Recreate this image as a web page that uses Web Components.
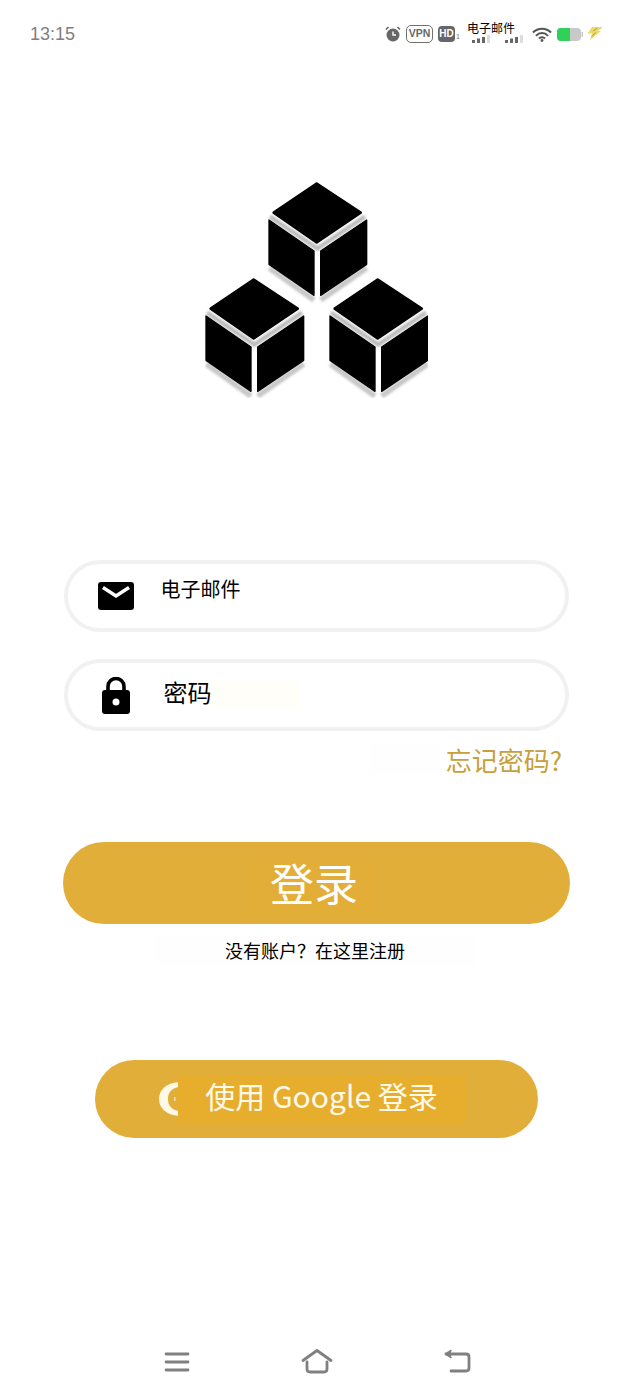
<!DOCTYPE html>
<html lang="zh">
<head>
<meta charset="utf-8">
<title>登录</title>
<style>
  html, body { margin: 0; padding: 0; background: #fff; }
  body { font-family: "Noto Sans CJK SC", "Noto Sans", sans-serif; }
</style>
</head>
<body>
<login-page>
  <status-bar></status-bar>
  <cube-logo></cube-logo>
  <field-row style="--mt: 162px; --label-size: 20px; --label-gap: 27px; --label-drop: 14px; --icon-left: 29.500px; --patch: 0;">
    <svg slot="icon" width="36" height="28" viewBox="0 0 36 28">
      <rect x="0" y="0" width="36" height="28" rx="3" fill="#000"/>
      <path d="M5 5.500 L18 14 L31 5.500" fill="none" stroke="#fff" stroke-width="3.400"/>
    </svg>
    电子邮件
  </field-row>
  <field-row style="--mt: 27px; --label-size: 24px; --label-gap: 34px; --label-drop: 5px; --icon-left: 33.500px; --patch: 1;">
    <svg slot="icon" width="28" height="37" viewBox="0 0 28 37">
      <path d="M6 15 V9.500 A8 8 0 0 1 22 9.500 V15" fill="none" stroke="#000" stroke-width="3.600"/>
      <path d="M3 13 H25 A3 3 0 0 1 28 16 V34 A3 3 0 0 1 25 37 H3 A3 3 0 0 1 0 34 V16 A3 3 0 0 1 3 13 Z M14 21.500 A3.500 3.500 0 1 0 14 28.500 A3.500 3.500 0 1 0 14 21.500 Z" fill="#000" fill-rule="evenodd"/>
    </svg>
    密码
  </field-row>
  <forgot-link>忘记密码?</forgot-link>
  <pill-button style="--w: 507px; --h: 82px; --mt: 51px; --size: 44px; --shift: 3px; --pad-x: 20px; --lift: 1px; --patch-bg: #e3ae37;">登录</pill-button>
  <register-hint>没有账户？在这里注册</register-hint>
  <pill-button style="--w: 443px; --h: 78px; --mt: 95px; --size: 30px; --shift: 10px; --pad-x: 27px; --lift: 4px; --patch-bg: #e7ae2e; --ink: #fff9ec;">
    <svg slot="icon" width="22" height="36" viewBox="0 0 22 36">
      <path d="M21 1 C8 2 1 9 1 18 C1 27 8 34 21 35 L21 30 C14 29 10 25 10 18 C10 11 14 7 21 6 Z" fill="#fff8e6"/>
      <rect x="16" y="16" width="1.500" height="4" fill="#f4dfa8"/>
    </svg>
    使用 Google 登录
  </pill-button>
  <nav-bar></nav-bar>
</login-page>

<script>
class LoginPage extends HTMLElement {
  constructor() {
    super();
    this.attachShadow({ mode: 'open' }).innerHTML = `
      <style>
        :host { display: flex; flex-direction: column; align-items: center; width: 633px; height: 1400px; overflow: hidden; background: #fff; }
      </style>
      <slot></slot>`;
  }
}

class StatusBar extends HTMLElement {
  constructor() {
    super();
    this.attachShadow({ mode: 'open' }).innerHTML = `
      <style>
        :host { display: flex; align-items: center; justify-content: space-between; box-sizing: border-box; width: 633px; height: 68px; padding: 0 30px; position: relative; }
        .time { font: 18px "Liberation Sans", sans-serif; color: #7f7f7f; }
        .icons { display: flex; align-items: center; }
        .vpn { box-sizing: border-box; width: 27px; height: 18px; margin: 0 5px 0 5px; border: 1.500px solid #707070; border-radius: 5px; font: bold 10.500px/15px "Liberation Sans", sans-serif; color: #666; text-align: center; }
        .hd { width: 17px; height: 16px; border-radius: 4px; background: #666; color: #fff; font: bold 10px/16px "Liberation Sans", sans-serif; text-align: center; }
        .one { width: 17px; font: 7px/15px "Liberation Sans", sans-serif; color: #777; padding: 4px 0 0 1px; box-sizing: border-box; }
        svg { display: block; }
        .sig { margin-right: 13px; margin-top: 10px; }
        .over { position: absolute; left: 467px; top: 19px; font: 12px/18px "Noto Sans CJK SC", sans-serif; color: #000; }
      </style>
      <span class="time">13:15</span>
      <div class="icons">
        <svg width="16" height="16" viewBox="0 0 16 16">
          <circle cx="8" cy="9" r="6.500" fill="#666"/>
          <path d="M8 5.500 V9 H11" fill="none" stroke="#fff" stroke-width="1.400"/>
          <path d="M1 3.500 L3.500 1 M15 3.500 L12.500 1" stroke="#666" stroke-width="1.600"/>
        </svg>
        <span class="vpn">VPN</span>
        <span class="hd">HD</span>
        <span class="one">1</span>
        <svg class="sig" width="20" height="8" viewBox="0 0 20 8">
          <rect x="0" y="5" width="3" height="3" fill="#666"/><rect x="5" y="3.500" width="3" height="4.500" fill="#666"/>
          <rect x="10" y="2" width="3" height="6" fill="#666"/><rect x="15" y="0" width="3" height="8" fill="#ddd"/>
        </svg>
        <svg class="sig" style="margin-right:7px" width="20" height="8" viewBox="0 0 20 8">
          <rect x="0" y="5" width="3" height="3" fill="#666"/><rect x="5" y="3.500" width="3" height="4.500" fill="#666"/>
          <rect x="10" y="2" width="3" height="6" fill="#666"/><rect x="15" y="0" width="3" height="8" fill="#ddd"/>
        </svg>
        <svg width="20" height="15" viewBox="0 0 20 15">
          <path d="M1 5.500 A12.500 12.500 0 0 1 19 5.500 M4 8.800 A8 8 0 0 1 16 8.800 M7 11.500 A4 4 0 0 1 13 11.500" fill="none" stroke="#555" stroke-width="2"/>
          <circle cx="10" cy="13.500" r="1.400" fill="#555"/>
        </svg>
        <svg style="margin-left:5px" width="26" height="13" viewBox="0 0 26 13">
          <rect x="0" y="0" width="24" height="13" rx="4" fill="#c9c9c9"/>
          <path d="M4 0 H13 V13 H4 A4 4 0 0 1 0 9 V4 A4 4 0 0 1 4 0 Z" fill="#2fd158"/>
          <rect x="24.500" y="4" width="1.500" height="5" fill="#c9c9c9"/>
        </svg>
        <svg style="margin-left:4px;margin-top:-3px" width="16" height="14" viewBox="0 0 16 14">
          <path d="M5 1 H16 L11 5 H14 L3 14 L5 7.500 H0.500 Z" fill="#ecd96a"/>
          <path d="M6 5 L10.500 2 M4.500 10.500 L9 6.500" stroke="#b9a12e" stroke-width="1"/>
        </svg>
      </div>
      <span class="over">电子邮件</span>`;
  }
}

class CubeLogo extends HTMLElement {
  constructor() {
    super();
    this.attachShadow({ mode: 'open' }).innerHTML = `
      <style>
        :host { display: block; width: 223px; height: 216px; margin-top: 114px; }
        svg { display: block; }
      </style>
      <svg width="223" height="216" viewBox="45 38 669 648">
        <defs>
          <filter id="soft" x="-10%" y="-10%" width="120%" height="120%">
            <feGaussianBlur stdDeviation="3"/>
          </filter>
          <g id="cube">
            <path d="M240 142 L382 238 L525 142" fill="none" stroke="#bcbcbc" stroke-width="13" filter="url(#soft)"/>
            <path d="M238 296 L372 392 M392 392 L530 296" fill="none" stroke="#c8c8c8" stroke-width="17" filter="url(#soft)"/>
            <path d="M380 43 L512 130 L380 219 L251 130 Z" fill="#000" stroke="#000" stroke-width="8" stroke-linejoin="round"/>
            <path d="M237 152 L372 245 V378 L237 285 Z" fill="#000" stroke="#000" stroke-width="4" stroke-linejoin="round"/>
            <path d="M392 245 L530 152 V285 L392 378 Z" fill="#000" stroke="#000" stroke-width="4" stroke-linejoin="round"/>
          </g>
        </defs>
        <use href="#cube"/>
        <use href="#cube" x="-189" y="288"/>
        <use href="#cube" x="183" y="288"/>
      </svg>`;
  }
}

class FieldRow extends HTMLElement {
  constructor() {
    super();
    this.attachShadow({ mode: 'open' }).innerHTML = `
      <style>
        :host { display: flex; align-items: center; box-sizing: border-box; width: 505px; height: 72px; margin-top: var(--mt); padding-left: var(--icon-left); border: 4.500px solid #f1f1f1; border-radius: 36px; background: #fff; color: #000; }
        .icon { display: flex; }
        .label { margin-left: var(--label-gap); margin-bottom: var(--label-drop); font-size: var(--label-size); line-height: 1.2; }
        .patch { width: 86px; height: 28px; margin-bottom: 3px; background: #fffef9; opacity: var(--patch); }
      </style>
      <span class="icon"><slot name="icon"></slot></span>
      <span class="label"><slot></slot></span>
      <span class="patch"></span>`;
  }
}

class ForgotLink extends HTMLElement {
  constructor() {
    super();
    this.attachShadow({ mode: 'open' }).innerHTML = `
      <style>
        :host { display: flex; align-items: center; justify-content: flex-end; box-sizing: border-box; width: 505px; height: 60px; padding: 0 7px 4px 0; font-size: 26px; color: #c6a03c; }
        .patch { width: 70px; height: 30px; margin-right: 6px; background: #fefefe; }
      </style>
      <span class="patch"></span>
      <slot></slot>`;
  }
}

class PillButton extends HTMLElement {
  constructor() {
    super();
    this.attachShadow({ mode: 'open' }).innerHTML = `
      <style>
        :host { display: flex; align-items: center; justify-content: center; box-sizing: border-box; width: var(--w); height: var(--h); margin-top: var(--mt); padding-right: var(--shift); border-radius: 100px; background: #e2ae3a; color: var(--ink, #fff); font-size: var(--size); line-height: 1.2; }
        .icon { display: flex; }
        .label { background: var(--patch-bg, transparent); padding: calc(6px - var(--lift, 0px)) var(--pad-x, 0) calc(6px + var(--lift, 0px)); margin-left: -2px; }
      </style>
      <span class="icon"><slot name="icon"></slot></span>
      <span class="label"><slot></slot></span>`;
  }
}

class RegisterHint extends HTMLElement {
  constructor() {
    super();
    this.attachShadow({ mode: 'open' }).innerHTML = `
      <style>
        :host { display: flex; align-items: center; justify-content: center; width: 320px; height: 30px; margin-top: 11px; margin-right: 3px; background: #fefefe; font-size: 18px; color: #000; }
      </style>
      <slot></slot>`;
  }
}

class NavBar extends HTMLElement {
  constructor() {
    super();
    this.attachShadow({ mode: 'open' }).innerHTML = `
      <style>
        :host { display: flex; align-items: center; justify-content: space-between; box-sizing: border-box; width: 633px; height: 26px; margin-top: 210px; padding: 0 162px 0 164px; }
        svg { display: block; fill: none; stroke: #808080; stroke-width: 2.800; stroke-linecap: round; stroke-linejoin: round; }
      </style>
      <svg width="26" height="24" viewBox="0 0 26 24">
        <path d="M2 5 H24 M2 13 H24 M2 21 H24"/>
      </svg>
      <svg width="32" height="26" viewBox="0 0 32 26">
        <path d="M2 12.500 L16 2.500 L30 12.500 M6 14 V21 Q6 24 9 24 H23 Q26 24 26 21 V14"/>
      </svg>
      <svg width="28" height="24" viewBox="0 0 28 24">
        <path d="M3 5 H23 Q26 5 26 8 V19 Q26 22 23 22 H8"/>
        <path d="M8 1.500 L2.500 5 L8 8.500" fill="#808080" stroke-width="1.500"/>
      </svg>`;
  }
}

customElements.define('login-page', LoginPage);
customElements.define('status-bar', StatusBar);
customElements.define('cube-logo', CubeLogo);
customElements.define('field-row', FieldRow);
customElements.define('forgot-link', ForgotLink);
customElements.define('pill-button', PillButton);
customElements.define('register-hint', RegisterHint);
customElements.define('nav-bar', NavBar);
</script>
</body>
</html>
